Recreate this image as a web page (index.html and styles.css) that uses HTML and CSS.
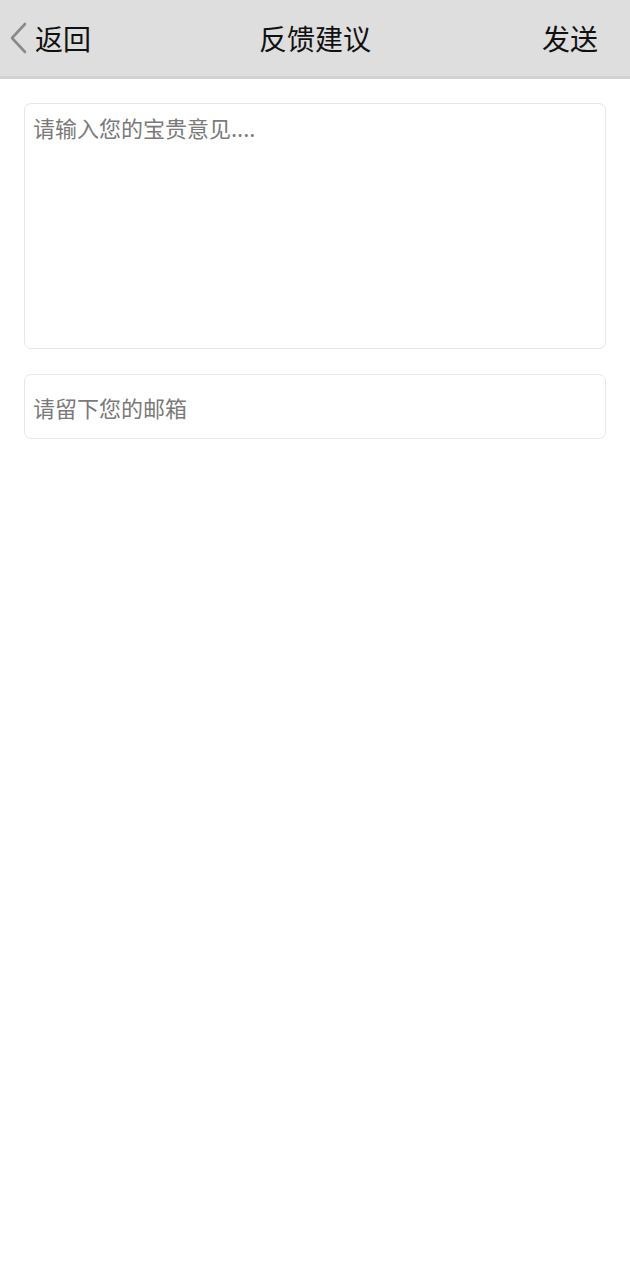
FILE: index.html
```html
<!DOCTYPE html>
<html lang="zh">
<head>
<meta charset="utf-8">
<title>反馈建议</title>
<link rel="stylesheet" href="styles.css">
</head>
<body>
<header class="topbar">
  <a class="back">
    <svg class="chev" width="20" height="32" viewBox="0 0 20 32"><path d="M17 2 L4 16 L17 30" fill="none" stroke="#8a8a8a" stroke-width="2.6" stroke-linecap="round" stroke-linejoin="round"/></svg>
    <span>返回</span>
  </a>
  <div class="title">反馈建议</div>
  <a class="send">发送</a>
</header>
<main class="content">
  <textarea class="feedback" placeholder="请输入您的宝贵意见...."></textarea>
  <input class="email" type="text" placeholder="请留下您的邮箱">
</main>
</body>
</html>
```

FILE: styles.css
```css
* { box-sizing: border-box; }
body {
  margin: 0;
  background: #fff;
  font-family: "Noto Sans CJK SC", "Noto Sans", sans-serif;
}
.topbar {
  height: 79px;
  background: #dedede;
  border-bottom: 3px solid #d2d2d2;
  display: flex;
  align-items: center;
  justify-content: space-between;
  padding: 0 32px 0 8px;
  position: relative;
  font-size: 28px;
  color: #111;
}
.back {
  display: flex;
  align-items: center;
  gap: 7px;
}
.chev { display: block; }
.title {
  position: absolute;
  left: 0;
  right: 0;
  text-align: center;
  pointer-events: none;
}
.content {
  padding: 24px 24px 0 24px;
  display: flex;
  flex-direction: column;
  gap: 25px;
}
.feedback, .email {
  width: 100%;
  border: 1px solid #e6e6e6;
  border-radius: 7px;
  font-family: inherit;
  font-size: 22px;
  color: #333;
  outline: none;
  background: #fff;
}
.feedback {
  height: 246px;
  resize: none;
  padding: 8px 8px;
  line-height: 30px;
}
.email {
  height: 65px;
  padding: 0 8px;
}
::placeholder { color: #7a7a7a; }
```
